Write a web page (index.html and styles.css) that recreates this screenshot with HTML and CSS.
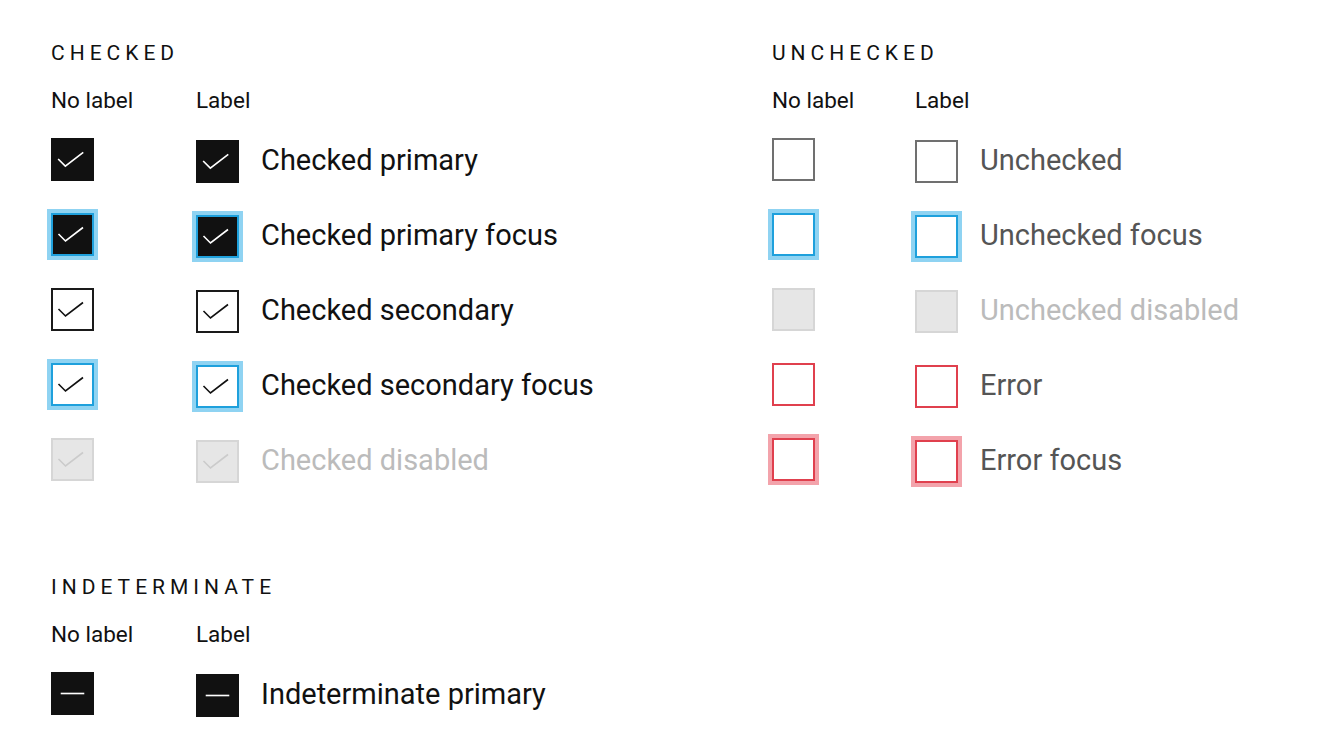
FILE: index.html
```html
<!DOCTYPE html>
<html lang="en">
<head>
    <meta charset="UTF-8">
    <meta name="viewport" content="width=device-width, initial-scale=1.0">
    <title>Checkbox states</title>
    <link rel="stylesheet" href="styles.css">
</head>
<body>
    <div class="sheet">
        <div class="group">
            <h2 class="group-title">Checked</h2>
            <div class="grid">
                <div class="col-head">No label</div>
                <div class="col-head">Label</div>

                <div class="cell"><span class="box primary"><svg viewBox="1.5 1.5 40 40"><path d="M7.5 21 L14.5 28 L32 14.5"/></svg></span></div>
                <div class="cell"><span class="box primary"><svg viewBox="1.5 1.5 40 40"><path d="M7.5 21 L14.5 28 L32 14.5"/></svg></span><span class="text">Checked primary</span></div>

                <div class="cell"><span class="box primary focus"><svg viewBox="2 2 39 39"><path d="M7.5 21 L14.5 28 L32 14.5"/></svg></span></div>
                <div class="cell"><span class="box primary focus"><svg viewBox="2 2 39 39"><path d="M7.5 21 L14.5 28 L32 14.5"/></svg></span><span class="text">Checked primary focus</span></div>

                <div class="cell"><span class="box secondary"><svg viewBox="2 2 39 39"><path d="M7.5 21 L14.5 28 L32 14.5"/></svg></span></div>
                <div class="cell"><span class="box secondary"><svg viewBox="2 2 39 39"><path d="M7.5 21 L14.5 28 L32 14.5"/></svg></span><span class="text">Checked secondary</span></div>

                <div class="cell"><span class="box secondary focus"><svg viewBox="2 2 39 39"><path d="M7.5 21 L14.5 28 L32 14.5"/></svg></span></div>
                <div class="cell"><span class="box secondary focus"><svg viewBox="2 2 39 39"><path d="M7.5 21 L14.5 28 L32 14.5"/></svg></span><span class="text">Checked secondary focus</span></div>

                <div class="cell"><span class="box disabled"><svg viewBox="2 2 39 39"><path d="M7.5 21 L14.5 28 L32 14.5"/></svg></span></div>
                <div class="cell"><span class="box disabled"><svg viewBox="2 2 39 39"><path d="M7.5 21 L14.5 28 L32 14.5"/></svg></span><span class="text muted">Checked disabled</span></div>
            </div>
        </div>

        <div class="group">
            <h2 class="group-title">Unchecked</h2>
            <div class="grid unchecked">
                <div class="col-head">No label</div>
                <div class="col-head">Label</div>

                <div class="cell"><span class="box empty"></span></div>
                <div class="cell"><span class="box empty"></span><span class="text">Unchecked</span></div>

                <div class="cell"><span class="box empty focus"></span></div>
                <div class="cell"><span class="box empty focus"></span><span class="text">Unchecked focus</span></div>

                <div class="cell"><span class="box disabled"></span></div>
                <div class="cell"><span class="box disabled"></span><span class="text muted">Unchecked disabled</span></div>

                <div class="cell"><span class="box error"></span></div>
                <div class="cell"><span class="box error"></span><span class="text">Error</span></div>

                <div class="cell"><span class="box error focus"></span></div>
                <div class="cell"><span class="box error focus"></span><span class="text">Error focus</span></div>
            </div>
        </div>

        <div class="group wide">
            <h2 class="group-title">Indeterminate</h2>
            <div class="grid">
                <div class="col-head">No label</div>
                <div class="col-head">Label</div>

                <div class="cell"><span class="box primary"><svg viewBox="1.5 1.5 40 40"><path d="M10 21.5 H33"/></svg></span></div>
                <div class="cell"><span class="box primary"><svg viewBox="1.5 1.5 40 40"><path d="M10 21.5 H33"/></svg></span><span class="text">Indeterminate primary</span></div>

                <div class="cell"><span class="box primary focus"><svg viewBox="2 2 39 39"><path d="M10 21.5 H33"/></svg></span></div>
                <div class="cell"><span class="box primary focus"><svg viewBox="2 2 39 39"><path d="M10 21.5 H33"/></svg></span><span class="text">Indeterminate primary focus</span></div>
            </div>
        </div>
    </div>
</body>
</html>
```

FILE: styles.css
```css
body {
    margin: 0;
    background: #fff;
    font-family: Roboto, "Liberation Sans", sans-serif;
    color: #111;
    height: 743px;
    overflow: hidden;
}
.sheet {
    display: grid;
    grid-template-columns: 721px 1fr;
    padding: 41px 0 0 51px;
}
.group.wide {
    grid-column: 1 / -1;
    margin-top: 78px;
}
.group-title {
    margin: 0;
    font-size: 21px;
    font-weight: 400;
    line-height: 24px;
    letter-spacing: 5px;
    text-transform: uppercase;
}
.grid {
    display: grid;
    grid-template-columns: 145px 1fr;
    grid-template-rows: 34px;
    grid-auto-rows: 75px;
    margin-top: 23px;
}
.grid.unchecked {
    grid-template-columns: 143px 1fr;
}
.col-head {
    font-size: 22.5px;
    line-height: 24px;
    align-self: start;
}
.cell {
    display: flex;
    align-items: center;
    gap: 22px;
}
.cell:nth-child(even) .box {
    margin-top: 4px;
}
.text {
    font-size: 29px;
    line-height: 32px;
}
.unchecked .text {
    color: #555;
}
.text.muted,
.unchecked .text.muted {
    color: #bbb;
}

/* box states */
.box {
    box-sizing: border-box;
    flex: none;
    width: 43px;
    height: 43px;
    border: 2px solid #707070;
    background: #fff;
    display: flex;
}
.box svg {
    width: 100%;
    height: 100%;
    fill: none;
    stroke-width: 1.6;
}
.box.primary {
    background: #111;
    border: 1.5px solid #111;
}
.box.primary svg {
    stroke: #fff;
}
.box.secondary {
    border-color: #1a1a1a;
}
.box.secondary svg {
    stroke: #111;
}
.box.empty {
    border-color: #707070;
}
.box.disabled {
    background: #e6e6e6;
    border-color: #d6d6d6;
}
.box.disabled svg {
    stroke: #cbcbcb;
}
.box.error {
    border-color: #e0404e;
}
.box.focus {
    border: 2px solid #1ea0dc;
    box-shadow: 0 0 0 4px #8fd3f2;
}
.box.error.focus {
    border-color: #e0404e;
    box-shadow: 0 0 0 4px #f3a3ab;
}
```
